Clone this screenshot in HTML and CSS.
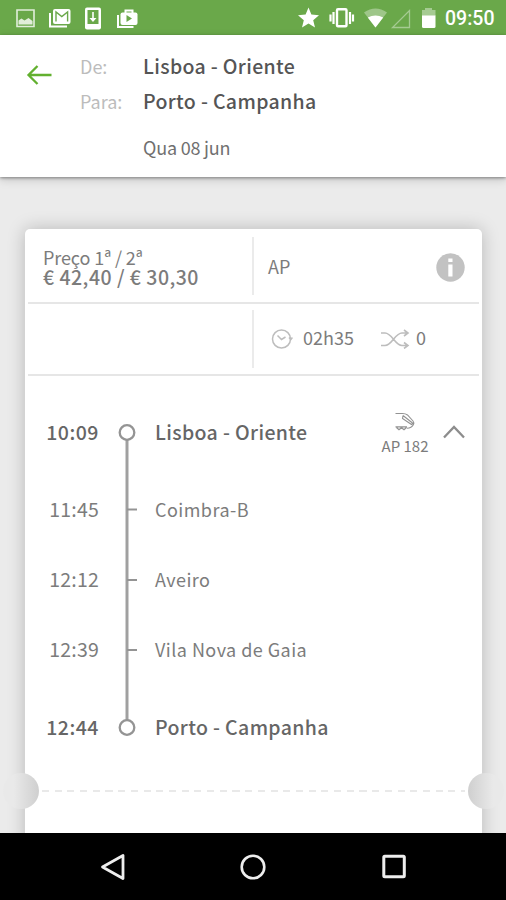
FILE: index.html
```html
<!DOCTYPE html>
<html lang="pt">
<head>
    <meta charset="UTF-8">
    <meta name="viewport" content="width=device-width, initial-scale=1.0">
    <title>Lisboa - Porto</title>
    <link rel="stylesheet" href="styles.css">
</head>
<body>
    <div class="status-bar">
        <svg class="status-left" width="150" height="35" viewBox="0 0 150 35">
            <g opacity="0.8">
                <path d="M17 10h17v16.500h-17z" fill="none" stroke="#fff" stroke-width="1.600"/>
                <path d="M18.500 24.500v-4l3-2 3 2 4-2.500 4 3v3.500z" fill="#fff"/>
            </g>
            <g fill="#fff">
                <path d="M50 13v13.500h17" fill="none" stroke="#fff" stroke-width="2"/>
                <rect x="53" y="9" width="17.500" height="15" rx="2"/>
                <path d="M56 21.500v-9.500l5.800 4.500 5.800-4.500v9.500" fill="none" stroke="#6aa84a" stroke-width="1.400"/>
                <rect x="85" y="7.500" width="16" height="22" rx="2"/>
                <rect x="87.500" y="10" width="11" height="14" fill="#6aa84a"/>
                <path d="M92.200 12h1.600v6h2.700l-3.500 4-3.500-4h2.700z"/>
                <path d="M118 15v12h15.500" fill="none" stroke="#fff" stroke-width="2"/>
                <rect x="120.500" y="12.500" width="17" height="12.500" rx="2"/>
                <path d="M125.500 13v-2.500h7v2.500" fill="none" stroke="#fff" stroke-width="2"/>
                <path d="M126.500 15v7l5.500-3.500z" fill="#6aa84a"/>
            </g>
        </svg>
        <svg class="status-right" width="142" height="35" viewBox="295 0 142 35">
            <g fill="#fff">
                <path d="M308.500 7.500l2.900 7.100 7.600.6-5.800 5 1.800 7.400-6.500-4-6.500 4 1.800-7.400-5.800-5 7.600-.6z"/>
                <rect x="337" y="9.300" width="9.500" height="17" rx="1" fill="none" stroke="#fff" stroke-width="2.400"/>
                <path d="M333.500 12v12M350 12v12M330.500 14.500v7M353 14.500v7" stroke="#fff" stroke-width="2.200"/>
                <path d="M364 12.500q11.500-8 23 0l-11.500 15z" opacity="0.35"/>
                <path d="M367.800 17.500q7.700-4 15.400 0l-7.700 10z"/>
                <path d="M392.500 27.500h17v-17z" fill="none" stroke="#fff" stroke-width="1.300" opacity="0.4"/>
                <path d="M422 10h3v-2h7v2h3.500v6h-13.500z" opacity="0.4"/>
                <path d="M422 15.500h13.500v11q0 1.500-1.500 1.500h-10.500q-1.500 0-1.500-1.500z"/>
            </g>
        </svg>
        <span class="clock">09:50</span>
    </div>

    <header class="header">
        <svg class="back" width="26" height="22" viewBox="0 0 26 22">
            <path d="M11.500 2L2.500 11l9 9M2.500 11h23" fill="none" stroke="#62b02f" stroke-width="2.300"/>
        </svg>
        <div class="route">
            <span class="label">De:</span>
            <span class="place">Lisboa - Oriente</span>
            <span class="label">Para:</span>
            <span class="place">Porto - Campanha</span>
            <span class="date">Qua 08 jun</span>
        </div>
    </header>

    <main class="content">
        <div class="ticket">
            <div class="info-row">
                <div class="cell price">
                    <span class="price-title">Preço 1ª / 2ª</span>
                    <span class="price-value">€ 42,40 / € 30,30</span>
                </div>
                <div class="cell service">
                    <span class="ap">AP</span>
                    <svg class="info" width="29" height="29" viewBox="0 0 29 29">
                        <circle cx="14.500" cy="14.500" r="14.200" fill="#c2c2c2"/>
                        <path d="M12.300 11.500h4.200v12h-4.200zM12.300 5.500h4.200v3.500h-4.200z" fill="#fff"/>
                    </svg>
                </div>
            </div>
            <div class="info-row second">
                <div class="cell"></div>
                <div class="cell duration">
                    <svg width="22" height="22" viewBox="0 0 22 22" fill="none" stroke="#bdbdbd" stroke-width="1.500">
                        <circle cx="10.500" cy="11" r="9"/>
                        <path d="M6.500 7.500l4 4 4-2.500M18 9.500l1.800 2 1.600-2"/>
                    </svg>
                    <span class="time-total">02h35</span>
                    <svg class="shuffle" width="30" height="20" viewBox="0 0 30 20" fill="none" stroke="#bdbdbd" stroke-width="1.600">
                        <path d="M1 4h4c7 0 10 12.500 17 12.500h6M1 16.500h4c7 0 10-12.500 17-12.500h6M24 1l4 3-4 3M24 13.500l4 3-4 3"/>
                    </svg>
                    <span class="changes">0</span>
                </div>
            </div>

            <div class="stops">
                <div class="stop main first">
                    <span class="hour">10:09</span>
                    <svg class="rail" width="24" height="84" viewBox="0 0 24 84">
                        <path d="M12 49v35" stroke="#a0a0a0" stroke-width="3"/>
                        <circle cx="12" cy="42.500" r="7.300" fill="#fff" stroke="#949494" stroke-width="2.300"/>
                    </svg>
                    <span class="station">Lisboa - Oriente</span>
                    <div class="train">
                        <svg width="22" height="19" viewBox="0 0 22 19" fill="none" stroke="#929292" stroke-width="1.100">
                            <path d="M1.500 1.500h7q3 0 5 1.500l5.500 6q1.500 2 .5 3.500-2 3.500-6.500 3.700M9 3.500l-.5 3 9 6 2-1.500M9 3.500l9.500 7.500"/>
                            <path d="M1.500 14.800h11.500M2.500 15.500l2.500 2.200 2.500-2 2.500 2 2.500-2.200" stroke-width="1.300"/>
                        </svg>
                        <span>AP 182</span>
                    </div>
                    <svg class="chevron" width="22" height="14" viewBox="0 0 22 14">
                        <path d="M1 12.500L11 2l10 10.500" fill="none" stroke="#8d8d8d" stroke-width="2.300"/>
                    </svg>
                </div>
                <div class="stop">
                    <span class="hour">11:45</span>
                    <svg class="rail" width="24" height="71" viewBox="0 0 24 71">
                        <path d="M12 0v71" stroke="#a0a0a0" stroke-width="3"/>
                        <path d="M12 35.500h10" stroke="#949494" stroke-width="2"/>
                    </svg>
                    <span class="station">Coimbra-B</span>
                </div>
                <div class="stop">
                    <span class="hour">12:12</span>
                    <svg class="rail" width="24" height="70" viewBox="0 0 24 70">
                        <path d="M12 0v70" stroke="#a0a0a0" stroke-width="3"/>
                        <path d="M12 35h10" stroke="#949494" stroke-width="2"/>
                    </svg>
                    <span class="station">Aveiro</span>
                </div>
                <div class="stop">
                    <span class="hour">12:39</span>
                    <svg class="rail" width="24" height="70" viewBox="0 0 24 70">
                        <path d="M12 0v70" stroke="#a0a0a0" stroke-width="3"/>
                        <path d="M12 35h10" stroke="#949494" stroke-width="2"/>
                    </svg>
                    <span class="station">Vila Nova de Gaia</span>
                </div>
                <div class="stop main last">
                    <span class="hour">12:44</span>
                    <svg class="rail" width="24" height="84" viewBox="0 0 24 84">
                        <path d="M12 0v35.500" stroke="#a0a0a0" stroke-width="3"/>
                        <circle cx="12" cy="42.500" r="7.300" fill="#fff" stroke="#949494" stroke-width="2.300"/>
                    </svg>
                    <span class="station">Porto - Campanha</span>
                </div>
            </div>

            <div class="tear">
                <span class="notch left"></span>
                <span class="dashes"></span>
                <span class="notch right"></span>
            </div>
        </div>
    </main>

    <nav class="nav-bar">
        <svg width="26" height="28" viewBox="0 0 26 28">
            <path d="M2.500 14L23 2.500v23z" fill="none" stroke="#eee" stroke-width="2.800" stroke-linejoin="round"/>
        </svg>
        <svg width="26" height="28" viewBox="0 0 26 28">
            <circle cx="13" cy="14" r="11.300" fill="none" stroke="#eee" stroke-width="2.600"/>
        </svg>
        <svg width="26" height="28" viewBox="0 0 26 28">
            <rect x="2.800" y="3.300" width="20.500" height="20.500" rx="1" fill="none" stroke="#eee" stroke-width="3"/>
        </svg>
    </nav>
</body>
</html>
```
FILE: styles.css
```css
* {
    box-sizing: border-box;
}
body {
    margin: 0;
    height: 900px;
    display: flex;
    flex-direction: column;
    overflow: hidden;
    font-family: "Noto Sans CJK SC", "Open Sans", sans-serif;
    font-size: 18px;
    line-height: 24px;
    color: #7c7c7c;
    background-color: #ebebeb;
}
svg {
    display: block;
    flex-shrink: 0;
}
span {
    white-space: nowrap;
}
.status-bar {
    height: 35px;
    flex-shrink: 0;
    display: flex;
    align-items: center;
    background-color: #6aa84a;
}
.status-right {
    margin-left: 145px;
}
.clock {
    margin-left: 8px;
    padding-top: 2px;
    font-family: Roboto, sans-serif;
    font-size: 19.5px;
    font-weight: 500;
    color: white;
}
.header {
    position: relative;
    height: 142px;
    flex-shrink: 0;
    display: flex;
    background-color: white;
    box-shadow: 0 1px 3px rgba(0, 0, 0, 0.4), 0 3px 9px rgba(0, 0, 0, 0.15);
}
.back {
    margin: 29px 0 0 26px;
}
.route {
    display: grid;
    grid-template-columns: 63px auto;
    grid-template-rows: 35px 35px 35px;
    align-content: start;
    align-items: center;
    padding-top: 13px;
    margin-left: 28px;
}
.label {
    color: #bcbcbc;
}
.place {
    padding-top: 1px;
    font-size: 19.5px;
    font-weight: 500;
    letter-spacing: 0.34px;
    color: #555;
}
.date {
    grid-column: 2;
    padding-top: 22px;
    letter-spacing: -0.2px;
    color: #707070;
}
.content {
    height: 656px;
    padding: 52px 24px 0 25px;
    overflow: hidden;
}
.ticket {
    height: 620px;
    border-radius: 5px;
    background-color: white;
    box-shadow: 0 0 18px rgba(0, 0, 0, 0.22);
}
.info-row {
    height: 75px;
    margin: 0 3px;
    display: grid;
    grid-template-columns: 224px 1fr;
    border-bottom: 2px solid #e6e6e6;
}
.info-row.second {
    height: 72px;
}
.cell {
    display: flex;
    align-items: center;
}
.cell + .cell {
    height: 58px;
    align-self: center;
    border-left: 2px solid #ebebeb;
}
.price {
    flex-direction: column;
    align-items: flex-start;
    justify-content: center;
    padding: 2px 0 0 15px;
    line-height: 20px;
}
.price-title {
    letter-spacing: -0.1px;
}
.price-value {
    font-size: 19.5px;
    font-weight: 500;
    letter-spacing: 0.47px;
}
.service {
    justify-content: space-between;
    padding: 0 14px 0 14px;
}
.info {
    position: relative;
    top: 2px;
}
.duration {
    padding-left: 17px;
}
.time-total {
    margin: -4px 0 0 10px;
}
.shuffle {
    margin-left: 26px;
}
.changes {
    margin: -4px 0 0 6px;
}
.stops {
    padding-top: 14px;
}
.stop {
    height: 70px;
    display: flex;
    align-items: center;
}
.stop.main {
    height: 84px;
}
.first + .stop {
    height: 71px;
}
.hour {
    width: 74px;
    margin-top: -2px;
    text-align: right;
    font-size: 19.5px;
    letter-spacing: 0.2px;
}
.station {
    margin-top: -2px;
    letter-spacing: 0.46px;
}
.rail {
    margin: 0 16px;
}
.main .hour,
.main .station {
    margin-top: 0;
    font-size: 19.5px;
    font-weight: 500;
    letter-spacing: 0.36px;
    color: #666;
}
.main .hour {
    letter-spacing: 0.5px;
}
.train {
    width: 50px;
    margin-left: auto;
    padding-top: 5px;
    display: flex;
    flex-direction: column;
    align-items: center;
    gap: 3px;
    font-size: 15px;
}
.chevron {
    margin: 0 17px 0 13px;
}
.tear {
    position: relative;
    height: 36px;
    margin-top: 4px;
    padding: 0 17px;
    display: flex;
    align-items: center;
}
.dashes {
    flex: 1;
    height: 2px;
    background: repeating-linear-gradient(to right, #e9e9e9 0, #e9e9e9 7px, transparent 7px, transparent 12.7px);
}
.notch {
    position: absolute;
    top: 0;
    width: 36px;
    height: 36px;
    border-radius: 50%;
}
.notch.left {
    left: -22px;
    background: linear-gradient(to right, #e9e9e9 30%, #cfcfcf);
}
.notch.right {
    right: -22px;
    background: linear-gradient(to left, #e9e9e9 30%, #cfcfcf);
}
.nav-bar {
    height: 67px;
    flex-shrink: 0;
    display: flex;
    justify-content: center;
    align-items: center;
    gap: 114.5px;
    background-color: black;
}
```
